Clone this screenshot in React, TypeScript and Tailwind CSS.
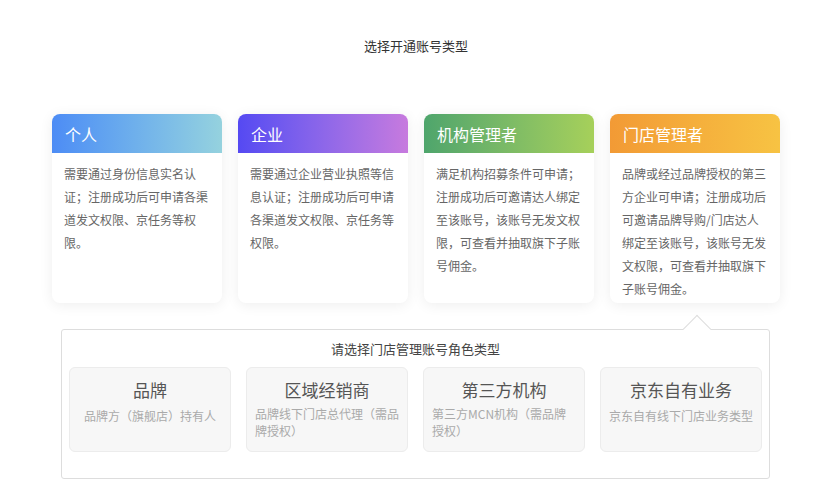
const roles = [
  {
    title: "个人",
    grad: "bg-gradient-to-r from-[#4d8cf5] to-[#95d2de]",
    desc: "需要通过身份信息实名认证；注册成功后可申请各渠道发文权限、京任务等权限。",
  },
  {
    title: "企业",
    grad: "bg-gradient-to-r from-[#5549f2] to-[#c77ade]",
    desc: "需要通过企业营业执照等信息认证；注册成功后可申请各渠道发文权限、京任务等权限。",
  },
  {
    title: "机构管理者",
    grad: "bg-gradient-to-r from-[#4ea56c] to-[#a6d05a]",
    desc: "满足机构招募条件可申请；注册成功后可邀请达人绑定至该账号，该账号无发文权限，可查看并抽取旗下子账号佣金。",
  },
  {
    title: "门店管理者",
    grad: "bg-gradient-to-r from-[#f29a35] to-[#f7c343]",
    desc: "品牌或经过品牌授权的第三方企业可申请；注册成功后可邀请品牌导购/门店达人绑定至该账号，该账号无发文权限，可查看并抽取旗下子账号佣金。",
  },
];

const storeTypes = [
  { title: "品牌", desc: "品牌方（旗舰店）持有人" },
  { title: "区域经销商", desc: "品牌线下门店总代理（需品牌授权）" },
  { title: "第三方机构", desc: "第三方MCN机构（需品牌授权）" },
  { title: "京东自有业务", desc: "京东自有线下门店业务类型" },
];

export default function App() {
  return (
    <div className="w-[832px] h-[496px] bg-white flex flex-col items-center font-['Microsoft_YaHei','Noto_Sans_CJK_SC',sans-serif]">
      <h1 className="pt-[36px] text-[13px] leading-[20px] text-[#333]">选择开通账号类型</h1>

      {/* Role cards */}
      <div className="mt-[58px] flex gap-[16px]">
        {roles.map((r) => (
          <div
            key={r.title}
            className="w-[170px] h-[189px] rounded-lg bg-white overflow-hidden shadow-[0_2px_14px_rgba(0,0,0,0.07)]"
          >
            <div className={`h-[39px] pl-[13px] flex items-center text-[16px] text-white ${r.grad}`}>
              {r.title}
            </div>
            <p className="px-[12px] pt-[9px] text-[12px] leading-[23px] text-[#666]">{r.desc}</p>
          </div>
        ))}
      </div>

      {/* Store manager sub types */}
      <div className="relative mt-[26px] ml-[-1px] w-[709px] h-[150px] border border-[#dddddd] rounded-[3px] bg-white px-[7px]">
        <div className="absolute top-[-11px] left-[625px] w-[20px] h-[20px] rotate-45 bg-white border-l border-t border-[#dddddd]" />
        <p className="relative pt-[9px] text-center text-[13px] leading-[20px] text-[#444]">
          请选择门店管理账号角色类型
        </p>
        <div className="mt-[8px] flex gap-[15px]">
          {storeTypes.map((s) => (
            <div
              key={s.title}
              className="w-[162px] h-[85px] rounded-md border border-[#ececec] bg-[#f7f7f7] px-[8px] pt-[10px] text-center"
            >
              <div className="text-[17px] leading-[24px] text-[#555]">{s.title}</div>
              <div className="mt-[3px] inline-block text-left text-[12px] leading-[17px] text-[#aaa]">
                {s.desc}
              </div>
            </div>
          ))}
        </div>
      </div>
    </div>
  );
}
